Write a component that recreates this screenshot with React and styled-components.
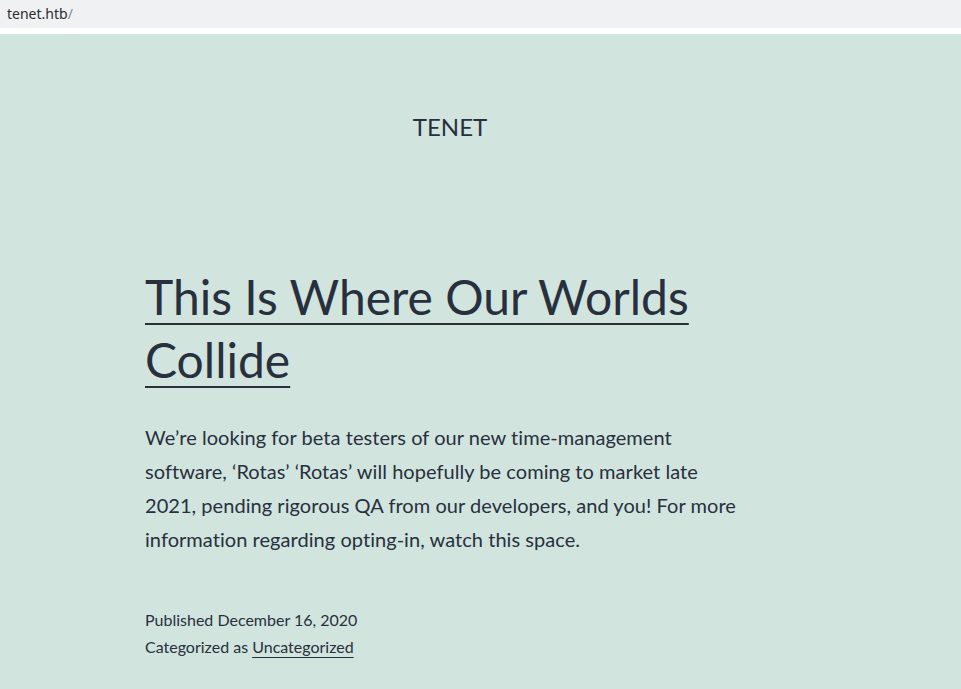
import React from "react";
import styled, { createGlobalStyle } from "styled-components";

const GlobalStyle = createGlobalStyle`
  html, body { margin: 0; padding: 0; }
  body {
    background: #d1e4dd;
    font-family: "Lato", "Noto Sans", sans-serif;
    color: #28303d;
  }
`;

const Page = styled.div`
  min-height: 689px;
  display: flex;
  flex-direction: column;
  background: #d1e4dd;
`;

const AddressBar = styled.div`
  height: 28px;
  background: #f0f1f3;
  display: flex;
  align-items: flex-start;
  padding-left: 7px;
  font-family: "Noto Sans", sans-serif;
  font-size: 14px;
  line-height: 28px;
  color: #2b2b2b;
  border-bottom: 6px solid #ffffff;
  box-sizing: content-box;
`;

const Host = styled.span`
  color: #2b2b2b;
`;

const Slash = styled.span`
  color: #8a8a8a;
`;

const Main = styled.main`
  width: 900px;
  display: flex;
  flex-direction: column;
  align-items: center;
  padding-top: 77px;
`;

const SiteTitle = styled.div`
  font-size: 24px;
  line-height: 31.2px;
  text-transform: uppercase;
  font-weight: 400;
`;

const Article = styled.article`
  width: 610px;
  display: flex;
  flex-direction: column;
  margin-top: 124px;
`;

const EntryTitle = styled.h1`
  margin: 0;
  font-size: 48px;
  line-height: 62.4px;
  font-weight: 400;
`;

const TitleLink = styled.a`
  color: #28303d;
  text-decoration: underline;
  text-decoration-thickness: 1.5px;
  text-underline-offset: 8px;
`;

const Content = styled.p`
  margin: 28.5px 0 0;
  width: 600px;
  font-size: 20px;
  line-height: 34px;
  letter-spacing: 0.05px;
`;

const Meta = styled.footer`
  margin-top: 50px;
  display: flex;
  flex-direction: column;
  font-size: 16px;
  line-height: 27.2px;
`;

const MetaLink = styled.a`
  color: #28303d;
  text-decoration: underline;
  text-decoration-thickness: 1px;
  text-underline-offset: 4px;
`;

export default function App() {
  return (
    <Page>
      <GlobalStyle />
      <AddressBar>
        <Host>tenet.htb</Host>
        <Slash>/</Slash>
      </AddressBar>
      <Main>
        <SiteTitle>Tenet</SiteTitle>
        <Article>
          <EntryTitle>
            <TitleLink href="#">This Is Where Our Worlds Collide</TitleLink>
          </EntryTitle>
          <Content>
            We’re looking for beta testers of our new time-management software,
            ‘Rotas’ ‘Rotas’ will hopefully be coming to market late 2021, pending
            rigorous QA from our developers, and you! For more information
            regarding opting-in, watch this space.
          </Content>
          <Meta>
            <span>Published December 16, 2020</span>
            <span>
              Categorized as <MetaLink href="#">Uncategorized</MetaLink>
            </span>
          </Meta>
        </Article>
      </Main>
    </Page>
  );
}
